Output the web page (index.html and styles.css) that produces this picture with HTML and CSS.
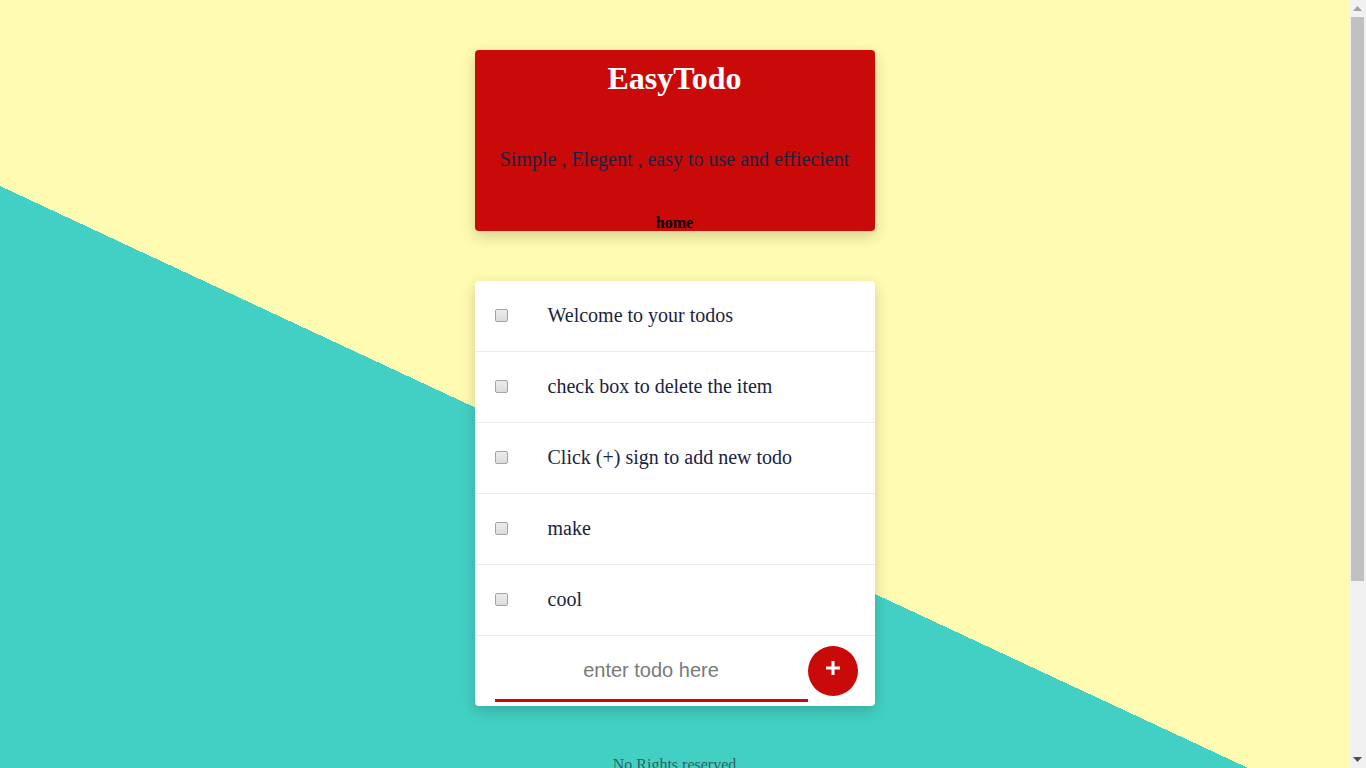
FILE: index.html
```html
<!DOCTYPE html>
<html lang="en">
<head>
<meta charset="utf-8">
<title>EasyTodo</title>
<link rel="stylesheet" href="styles.css">
</head>
<body>
<div class="page">
  <main class="app">
    <header class="hero">
      <h1 class="hero-title">EasyTodo</h1>
      <p class="hero-sub">Simple , Elegent , easy to use and effiecient</p>
      <nav class="hero-nav"><span class="nav-link">home</span></nav>
    </header>

    <section class="todo-card">
      <ul class="todo-list">
        <li class="todo-item"><input class="todo-check" type="checkbox"><span class="todo-text">Welcome to your todos</span></li>
        <li class="todo-item"><input class="todo-check" type="checkbox"><span class="todo-text">check box to delete the item</span></li>
        <li class="todo-item"><input class="todo-check" type="checkbox"><span class="todo-text">Click (+) sign to add new todo</span></li>
        <li class="todo-item"><input class="todo-check" type="checkbox"><span class="todo-text">make</span></li>
        <li class="todo-item"><input class="todo-check" type="checkbox"><span class="todo-text">cool</span></li>
      </ul>
      <form class="todo-form">
        <input class="todo-input" type="text" placeholder="enter todo here">
        <button class="add-btn" type="button" aria-label="add">
          <svg width="18" height="18" viewBox="0 0 18 18"><path d="M9 2v14M2 9h14" stroke="#fff" stroke-width="3" fill="none"/></svg>
        </button>
      </form>
    </section>

    <footer class="footer">No Rights reserved</footer>
  </main>
</div>
<div class="scrollbar" aria-hidden="true">
  <div class="sb-btn"><svg width="9" height="5" viewBox="0 0 9 5"><polygon points="0,5 9,5 4.5,0" fill="#a3a3a3"/></svg></div>
  <div class="sb-thumb"></div>
  <div class="sb-rest"></div>
  <div class="sb-btn"><svg width="9" height="5" viewBox="0 0 9 5"><polygon points="0,0 9,0 4.5,5" fill="#505050"/></svg></div>
</div>
</body>
</html>
```

FILE: styles.css
```css
html, body {
  height: 100%;
}

body {
  margin: 0;
  display: flex;
  overflow: hidden;
  font-family: "Liberation Serif", "Times New Roman", serif;
}

.page {
  flex: 1;
  min-width: 0;
  height: 768px;
  overflow: hidden;
  background: linear-gradient(205deg, #fffbb0 58.34%, #43d0c4 58.34%);
}

.scrollbar {
  width: 17px;
  flex: none;
  height: 768px;
  display: flex;
  flex-direction: column;
  background: #f1f1f1;
}

.sb-btn {
  height: 17px;
  flex: none;
  display: flex;
  align-items: center;
  justify-content: center;
}

.sb-thumb {
  height: 564px;
  margin: 0 2px;
  flex: none;
  background: #c1c1c1;
}

.sb-rest {
  flex: 1;
}

.app {
  width: 400px;
  margin: 0 auto;
  padding-top: 50px;
}

.hero {
  background: #ca0909;
  border-radius: 4px;
  box-shadow: 0 5px 15px rgba(0, 0, 0, 0.18);
  text-align: center;
  padding: 10px 0 0;
}

.hero-title {
  margin: 0;
  font-size: 32px;
  line-height: 36px;
  font-weight: bold;
  color: #fff;
}

.hero-sub {
  margin: 52px 0 0;
  font-size: 20px;
  line-height: 22px;
  color: #1a2340;
}

.hero-nav {
  margin-top: 44px;
  line-height: 17px;
}

.nav-link {
  font-size: 16px;
  font-weight: bold;
  color: #000;
}

.todo-card {
  margin-top: 50px;
  background: #fff;
  border-radius: 4px;
  box-shadow: 0 5px 15px rgba(0, 0, 0, 0.18);
}

.todo-list {
  list-style: none;
  margin: 0;
  padding: 0;
}

.todo-item {
  display: flex;
  align-items: center;
  height: 70px;
  border-bottom: 1px solid #ececec;
  padding: 0 20px;
}

.todo-check {
  appearance: none;
  -webkit-appearance: none;
  box-sizing: border-box;
  width: 13px;
  height: 13px;
  margin: 0 0 1px;
  flex: none;
  border: 1px solid #a3a3a3;
  border-radius: 2px;
  background: linear-gradient(#ececec, #dcdcdc);
}

.todo-text {
  margin-left: 40px;
  padding-bottom: 2px;
  font-size: 20px;
  color: #1a2340;
}

.todo-form {
  display: flex;
  align-items: center;
  height: 70px;
  padding: 0 17px 0 20px;
  margin: 0;
}

.todo-input {
  flex: 1;
  min-width: 0;
  align-self: flex-end;
  margin-bottom: 4px;
  height: 60px;
  box-sizing: border-box;
  border: none;
  border-bottom: 3px solid #ca0909;
  padding: 0;
  outline: none;
  background: transparent;
  text-align: center;
  font-family: "Liberation Sans", Arial, sans-serif;
  font-size: 20px;
  color: #333;
}

.todo-input::placeholder {
  color: #7a7a7a;
}

.add-btn {
  width: 50px;
  height: 50px;
  flex: none;
  border: none;
  border-radius: 50%;
  background: #ca0909;
  padding: 0 0 6px;
  display: flex;
  align-items: center;
  justify-content: center;
}

.footer {
  margin-top: 50px;
  text-align: center;
  font-size: 16px;
  line-height: 18px;
  color: #2f6460;
}
```
